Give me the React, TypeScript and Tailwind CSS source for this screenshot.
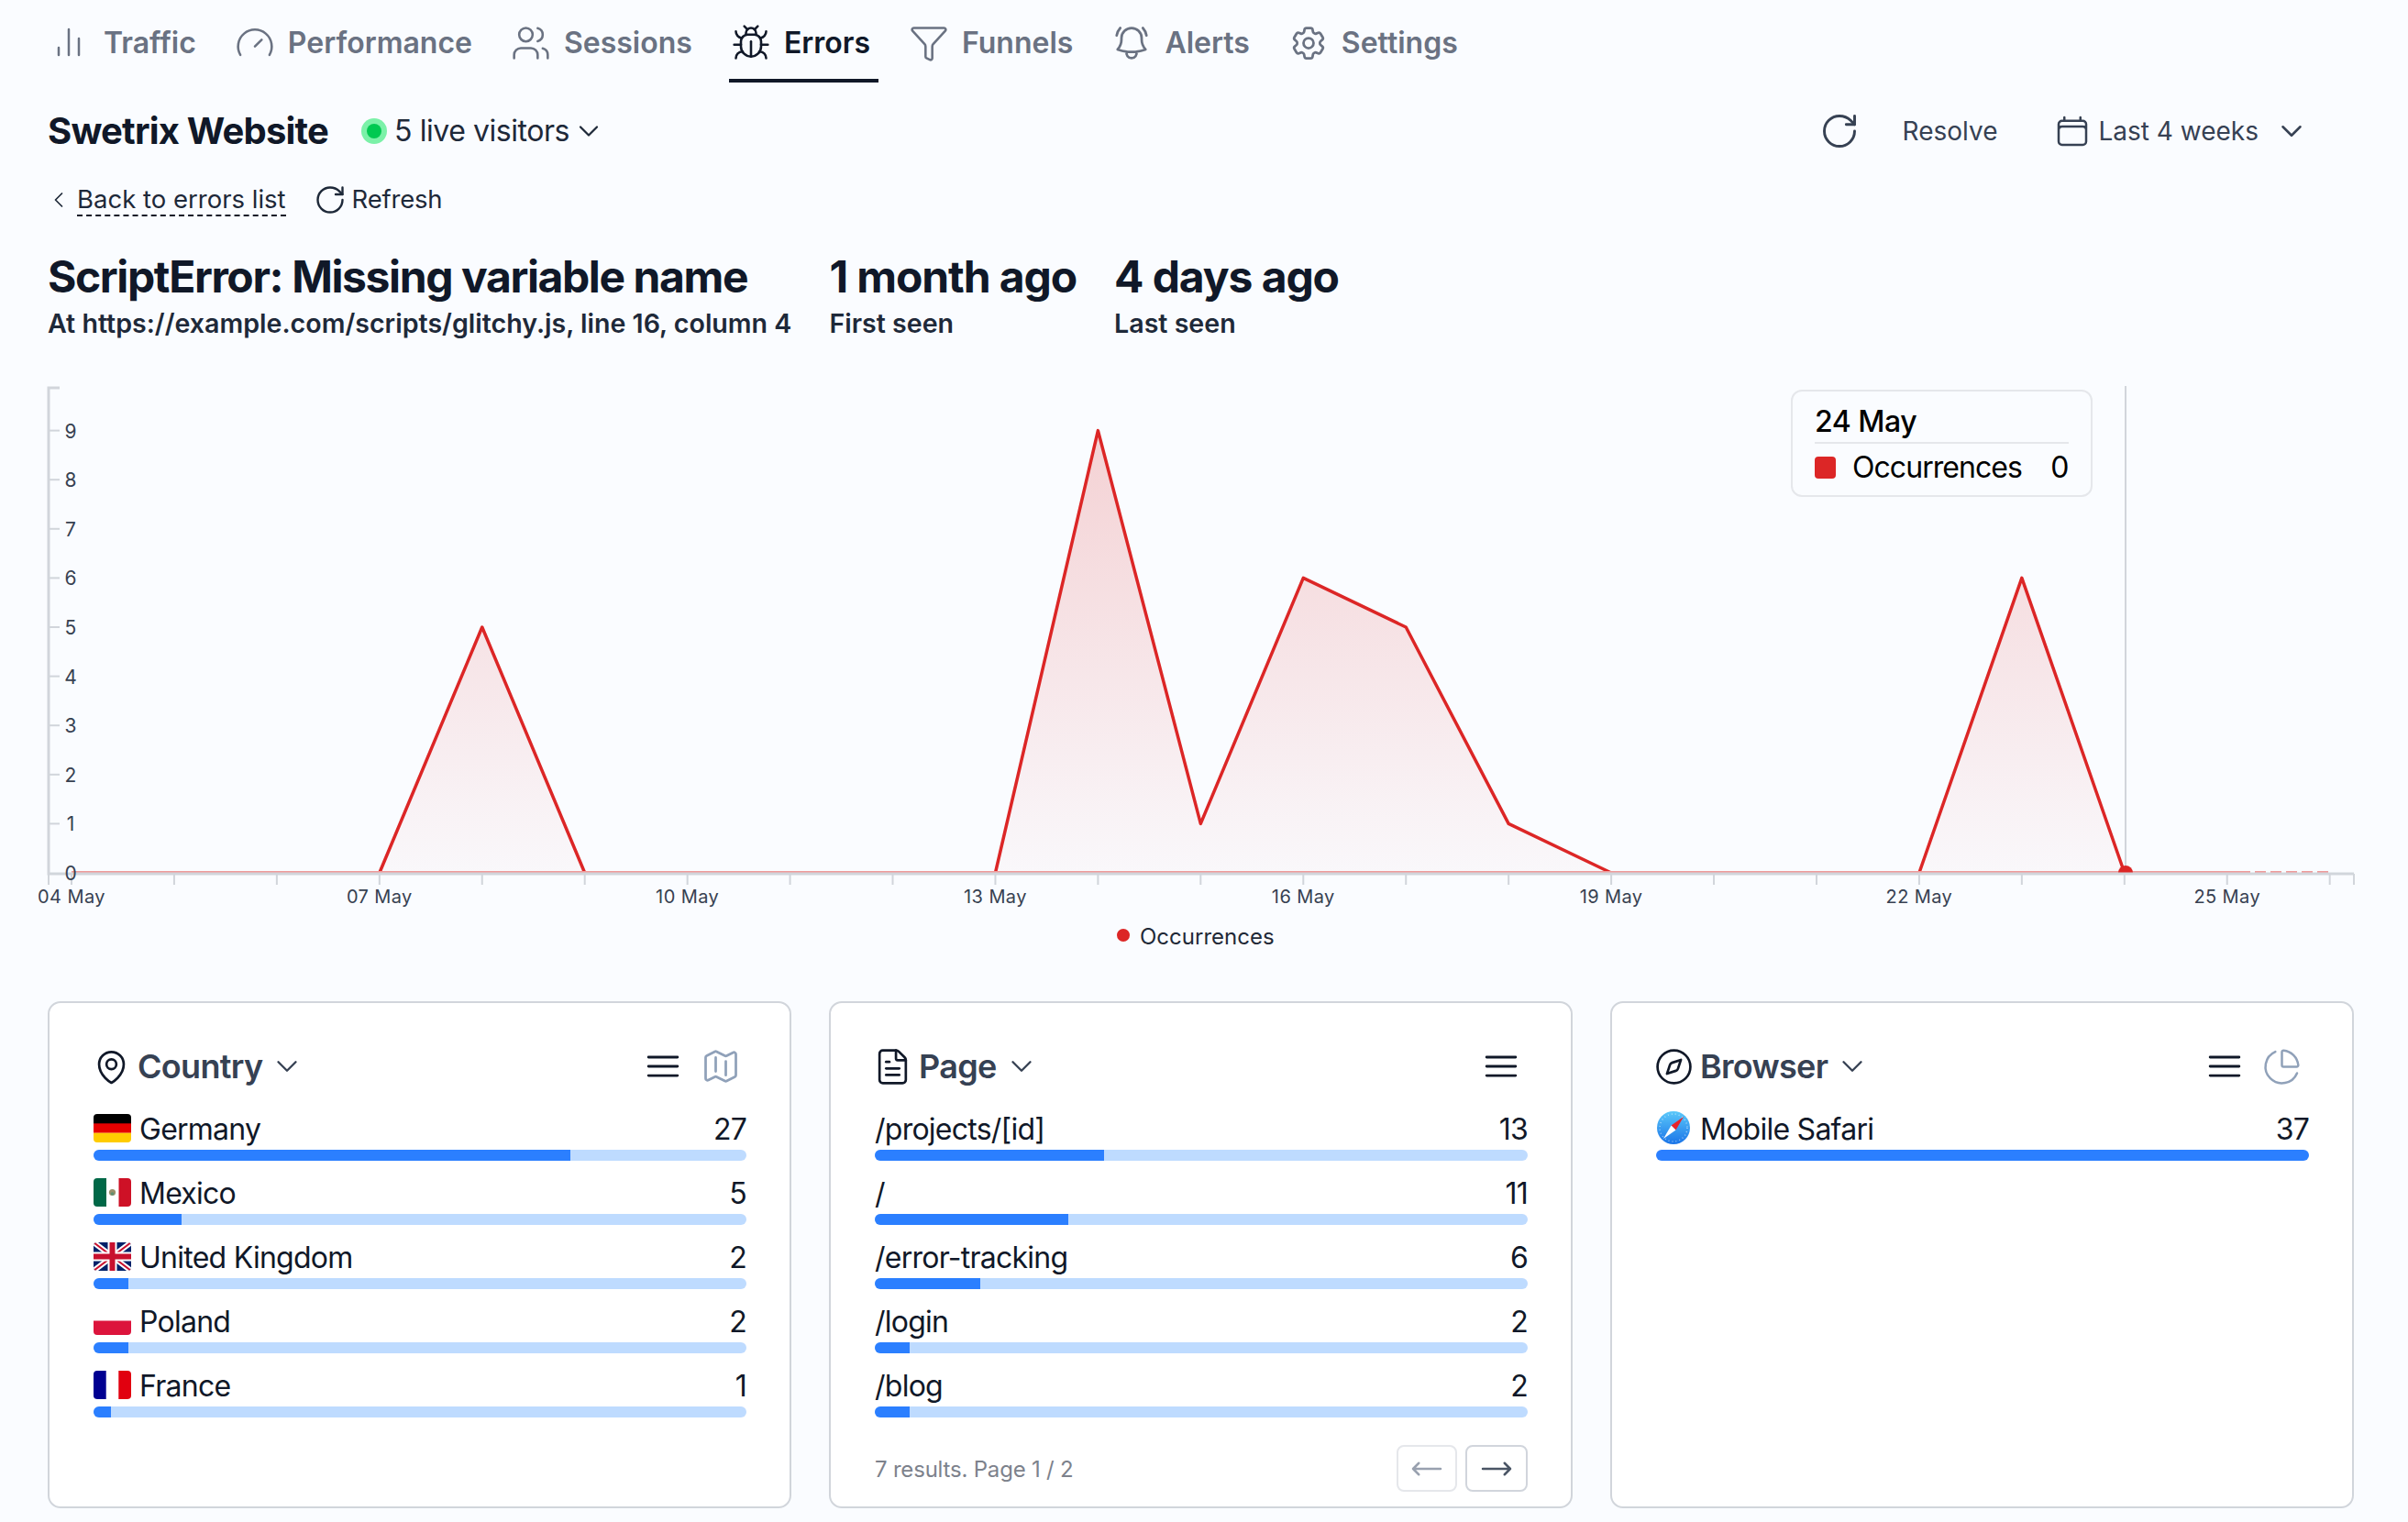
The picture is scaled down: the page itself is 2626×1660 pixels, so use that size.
import { Bug, ChartPie, ChevronDown, ChevronLeft, Compass, FileText, Funnel, Gauge, RotateCw, Users } from "lucide-react";
import {
  HiOutlineArrowLongLeft,
  HiOutlineArrowLongRight,
  HiOutlineBars3,
  HiOutlineBellAlert,
  HiOutlineCalendar,
  HiOutlineCog6Tooth,
  HiOutlineMap,
  HiOutlineMapPin,
} from "react-icons/hi2";
import type { ReactNode } from "react";

const TrafficIcon = () => (
  <svg viewBox="0 0 44 44" className="w-[44px] h-[44px] shrink-0" fill="none" stroke="currentColor" strokeWidth="2.5" strokeLinecap="round">
    <path d="M9 27v8M20 7v28M31 17v18" />
  </svg>
);

const tabs = [
  { label: "Traffic", icon: <TrafficIcon /> },
  { label: "Performance", icon: <Gauge className="w-[44px] h-[44px] shrink-0" strokeWidth={1.4} /> },
  { label: "Sessions", icon: <Users className="w-[44px] h-[44px] shrink-0" strokeWidth={1.4} /> },
  { label: "Errors", icon: <Bug className="w-[44px] h-[44px] shrink-0" strokeWidth={1.4} />, active: true },
  { label: "Funnels", icon: <Funnel className="w-[44px] h-[44px] shrink-0" strokeWidth={1.4} /> },
  { label: "Alerts", icon: <HiOutlineBellAlert className="w-[44px] h-[44px] shrink-0" /> },
  { label: "Settings", icon: <HiOutlineCog6Tooth className="w-[44px] h-[44px] shrink-0" /> },
];

const series = [0, 0, 0, 0, 5, 0, 0, 0, 0, 0, 9, 1, 6, 5, 1, 0, 0, 0, 0, 6, 0];
const xOf = (i: number) => 78 + 111.94 * i;
const yOf = (v: number) => 952 - 53.6 * v;
const xLabels = [
  ["04 May", 0],
  ["07 May", 3],
  ["10 May", 6],
  ["13 May", 9],
  ["16 May", 12],
  ["19 May", 15],
  ["22 May", 18],
  ["25 May", 21],
] as const;

const Chart = () => {
  const line = series.map((v, i) => `${xOf(i)},${yOf(v)}`).join(" ");
  const area = `${xOf(0)},952 ${line} ${xOf(20)},952`;
  const ticks = Array.from({ length: 23 }, (_, i) => xOf(i));
  return (
    <div className="relative h-[682px]">
      <svg viewBox="0 410 2626 682" className="block w-[2626px] h-[682px]">
        <defs>
          <linearGradient id="occ" gradientUnits="userSpaceOnUse" x1="0" y1="470" x2="0" y2="952">
            <stop offset="0" stopColor="#dc2626" stopOpacity="0.2" />
            <stop offset="1" stopColor="#dc2626" stopOpacity="0.02" />
          </linearGradient>
        </defs>
        <polygon points={area} fill="url(#occ)" />
        <line x1="2318" y1="421" x2="2318" y2="953" stroke="#d1d5db" strokeWidth="2" />
        <polyline points={line} fill="none" stroke="#dc2626" strokeWidth="3.5" strokeLinejoin="round" />
        <line x1="78" y1="951" x2="2442" y2="951" stroke="#ee9a9a" strokeWidth="2" />
        <line x1="2442" y1="951" x2="2540" y2="951" stroke="#ee9a9a" strokeWidth="2" strokeDasharray="12 5" />
        <path d="M2310 952a8 8 0 0 1 16 0z" fill="#dc2626" />
        {/* axes */}
        <path d="M65 423H53V953H2567" fill="none" stroke="#d1d5db" strokeWidth="3" />
        {[1, 2, 3, 4, 5, 6, 7, 8, 9].map((v) => (
          <line key={v} x1="53" x2="65" y1={yOf(v)} y2={yOf(v)} stroke="#d1d5db" strokeWidth="2" />
        ))}
        {[53, ...ticks, 2567].map((x) => (
          <line key={x} x1={x} x2={x} y1="953" y2="965" stroke="#d1d5db" strokeWidth="2" />
        ))}
        <g fill="#374151" fontSize="21" fontFamily="Inter, sans-serif">
          {[0, 1, 2, 3, 4, 5, 6, 7, 8, 9].map((v) => (
            <text key={v} x="77" y={yOf(v) + 8} textAnchor="middle">
              {v}
            </text>
          ))}
        </g>
        <g fill="#374151" fontSize="20" fontFamily="Inter, sans-serif">
          {xLabels.map(([label, i]) => (
            <text key={label} x={xOf(i)} y="985" textAnchor="middle" letterSpacing="0.4">
              {label}
            </text>
          ))}
        </g>
        <circle cx="1225" cy="1020" r="7" fill="#dc2626" />
        <text x="1243" y="1030" fontSize="24" fill="#1f2937" fontFamily="Inter, sans-serif">
          Occurrences
        </text>
      </svg>
      <div className="absolute left-[1953px] top-[15px] w-[329px] h-[117px] rounded-xl border-2 border-[#e5e7eb] bg-[#fafcff] px-[24px] text-black tracking-[-0.5px]">
        <div className="h-[57px] pt-[14px] border-b-2 border-[#e5e7eb] text-[32px] leading-[38px] font-medium">24 May</div>
        <div className="flex items-center h-[52px] text-[32px]">
          <span className="w-[23px] h-[24px] rounded-[4px] bg-[#dc2626]" />
          <span className="ml-[18px] tracking-[-0.95px]">Occurrences</span>
          <span className="ml-auto">0</span>
        </div>
      </div>
    </div>
  );
};

const FlagShell = ({ children }: { children: ReactNode }) => (
  <svg viewBox="0 0 41 31" className="w-[41px] h-[31px] shrink-0 rounded-[4px]">
    {children}
  </svg>
);

const Germany = () => (
  <FlagShell>
    <rect width="41" height="11" fill="#000" />
    <rect y="10.3" width="41" height="10.4" fill="#e60000" />
    <rect y="20.7" width="41" height="10.3" fill="#ffcc00" />
  </FlagShell>
);
const Mexico = () => (
  <FlagShell>
    <rect width="14" height="31" fill="#006847" />
    <rect x="27.5" width="13.5" height="31" fill="#ce1126" />
    <circle cx="20.5" cy="15.5" r="3.6" fill="#9a8f6a" />
    <circle cx="20.5" cy="17" r="1.8" fill="#5f8f72" />
  </FlagShell>
);
const UnitedKingdom = () => (
  <FlagShell>
    <rect width="41" height="31" fill="#012169" />
    <path d="M0 0 41 31M41 0 0 31" stroke="#fff" strokeWidth="6" />
    <path d="M0 0 41 31M41 0 0 31" stroke="#c8102e" strokeWidth="2" />
    <path d="M20.5 0v31M0 15.5h41" stroke="#fff" strokeWidth="10" />
    <path d="M20.5 0v31M0 15.5h41" stroke="#c8102e" strokeWidth="6" />
  </FlagShell>
);
const Poland = () => (
  <FlagShell>
    <rect y="15.5" width="41" height="15.5" fill="#dc143c" />
  </FlagShell>
);
const France = () => (
  <FlagShell>
    <rect width="13.7" height="31" fill="#000091" />
    <rect x="27.3" width="13.7" height="31" fill="#e1000f" />
  </FlagShell>
);

const SafariIcon = () => (
  <svg viewBox="0 0 36 36" className="w-[36px] h-[36px] shrink-0 ml-[1px] mr-[2px]">
    <defs>
      <linearGradient id="saf" x1="0" y1="0" x2="0" y2="1">
        <stop offset="0" stopColor="#5ac8fa" />
        <stop offset="1" stopColor="#1a74e8" />
      </linearGradient>
    </defs>
    <circle cx="18" cy="18" r="18" fill="url(#saf)" />
    <circle cx="18" cy="18" r="15" fill="none" stroke="#fff" strokeOpacity="0.5" strokeWidth="1.5" strokeDasharray="1 3" />
    <polygon points="29,6 15.5,15.5 20.5,20.5" fill="#e8232a" />
    <polygon points="7,30 15.5,15.5 20.5,20.5" fill="#fff" />
  </svg>
);

const Row = ({ icon, label, value, percent }: { icon?: ReactNode; label: string; value: number; percent: number }) => (
  <div className="h-[70px]">
    <div className="flex items-center h-[48px] text-[32px] text-gray-900 tracking-[-0.75px]">
      {icon}
      <span className={icon ? "ml-[9px] pt-[3px]" : "pt-[3px]"}>{label}</span>
      <span className="ml-auto pt-[3px]">{value}</span>
    </div>
    <div className="h-[12px] rounded-full bg-blue-200 overflow-hidden">
      <div className="h-full bg-blue-500" style={{ width: `${percent}%` }} />
    </div>
  </div>
);

const Card = ({
  icon,
  title,
  actions,
  children,
}: {
  icon: ReactNode;
  title: string;
  actions: ReactNode;
  children: ReactNode;
}) => (
  <div className="w-[811px] h-[553px] rounded-[14px] border-2 border-[#d1d5db] bg-white pl-[48px] pr-[47px] pt-[41px]">
    <div className="flex items-center h-[56px] mb-[15px]">
      <span className="-ml-[2px] mr-[7px] text-gray-900 flex">{icon}</span>
      <span className="text-[36px] font-semibold text-gray-700 tracking-[-0.7px]">{title}</span>
      <ChevronDown className="w-[38px] h-[38px] ml-[8px] text-gray-700" strokeWidth={1.5} />
      <div className="ml-auto flex items-center gap-[18px] mr-[6px]">{actions}</div>
    </div>
    {children}
  </div>
);

const MenuIcon = () => <HiOutlineBars3 className="w-[46px] h-[46px] text-gray-900" />;

const App = () => {
  return (
    <div className="w-[2626px] h-[1660px] overflow-hidden bg-[#fafcff] font-['Inter',sans-serif] text-gray-900">
      <nav className="flex gap-[31px] pl-[53px] h-[90px]">
        {tabs.map((t) => (
          <div
            key={t.label}
            className={
              t.active
                ? "flex items-center gap-[14px] pl-[2px] pr-[9px] pt-[8px] border-b-4 border-gray-900 text-gray-900 text-[32px] font-semibold"
                : "flex items-center gap-[14px] pl-[2px] pr-[9px] pt-[8px] border-b-4 border-transparent text-gray-500 text-[32px] font-semibold"
            }
          >
            {t.icon}
            {t.label}
          </div>
        ))}
      </nav>

      <div className="flex items-center h-[106px] pl-[52px] pr-[108px]">
        <h1 className="text-[40px] font-bold tracking-[-0.8px]">Swetrix Website</h1>
        <span className="ml-[36px] w-[28px] h-[28px] rounded-full bg-green-300 flex items-center justify-center">
          <span className="w-[16px] h-[16px] rounded-full bg-green-500" />
        </span>
        <span className="ml-[8px] text-[32px] text-gray-800 tracking-[-0.45px]">5 live visitors</span>
        <ChevronDown className="w-[36px] h-[36px] ml-[3px] text-gray-800" strokeWidth={1.5} />
        <div className="ml-auto flex items-center text-gray-700 text-[28px]">
          <RotateCw className="w-[44px] h-[44px]" strokeWidth={1.6} />
          <span className="ml-[47px]">Resolve</span>
          <HiOutlineCalendar className="w-[40px] h-[40px] ml-[62px]" />
          <span className="ml-[8px]">Last 4 weeks</span>
          <ChevronDown className="w-[38px] h-[38px] ml-[17px]" strokeWidth={1.6} />
        </div>
      </div>

      <div className="flex items-center h-[44px] pl-[50px] text-[27.5px] text-gray-800">
        <ChevronLeft className="w-[28px] h-[28px]" strokeWidth={1.5} />
        <span className="ml-[6px] border-b-2 border-dashed border-gray-900 leading-[34px]">Back to errors list</span>
        <RotateCw className="w-[36px] h-[36px] ml-[30px]" strokeWidth={1.6} />
        <span className="ml-[6px] tracking-[-0.2px]">Refresh</span>
      </div>

      <div className="flex gap-[41px] pl-[52px] pt-[32px] h-[170px]">
        <div>
          <div className="text-[48px] leading-[60px] font-bold tracking-[-1.4px]">ScriptError: Missing variable name</div>
          <div className="mt-[3px] text-[28.6px] leading-[36px] font-semibold text-gray-800">
            At https://example.com/scripts/glitchy.js, line 16, column 4
          </div>
        </div>
        <div>
          <div className="text-[48px] leading-[60px] font-bold tracking-[-1.1px]">1 month ago</div>
          <div className="mt-[3px] text-[28.6px] leading-[36px] font-semibold text-gray-800">First seen</div>
        </div>
        <div>
          <div className="text-[48px] leading-[60px] font-bold tracking-[-1.1px]">4 days ago</div>
          <div className="mt-[3px] text-[28.6px] leading-[36px] font-semibold text-gray-800">Last seen</div>
        </div>
      </div>

      <Chart />

      <div className="flex gap-[41px] pl-[52px]">
        <Card
          icon={<HiOutlineMapPin className="w-[43px] h-[43px]" />}
          title="Country"
          actions={
            <>
              <MenuIcon />
              <HiOutlineMap className="w-[44px] h-[44px] text-slate-400" />
            </>
          }
        >
          <Row icon={<Germany />} label="Germany" value={27} percent={73} />
          <Row icon={<Mexico />} label="Mexico" value={5} percent={13.5} />
          <Row icon={<UnitedKingdom />} label="United Kingdom" value={2} percent={5.4} />
          <Row icon={<Poland />} label="Poland" value={2} percent={5.4} />
          <Row icon={<France />} label="France" value={1} percent={2.7} />
        </Card>

        <Card icon={<FileText className="w-[43px] h-[43px]" strokeWidth={1.5} />} title="Page" actions={<MenuIcon />}>
          <Row label="/projects/[id]" value={13} percent={35.1} />
          <Row label="/" value={11} percent={29.7} />
          <Row label="/error-tracking" value={6} percent={16.2} />
          <Row label="/login" value={2} percent={5.4} />
          <Row label="/blog" value={2} percent={5.4} />
          <div className="mt-[20px] flex items-center h-[51px]">
            <span className="pt-[2px] text-[24px] text-[#7d828c] tracking-[-0.2px]">7 results. Page 1 / 2</span>
            <div className="ml-auto flex gap-[9px]">
              <button className="w-[66px] h-[51px] rounded-lg border-2 border-gray-200 flex items-center justify-center text-gray-400">
                <HiOutlineArrowLongLeft className="w-[40px] h-[40px]" />
              </button>
              <button className="w-[68px] h-[51px] rounded-lg border-2 border-gray-300 flex items-center justify-center text-gray-600">
                <HiOutlineArrowLongRight className="w-[40px] h-[40px]" />
              </button>
            </div>
          </div>
        </Card>

        <Card
          icon={<Compass className="w-[43px] h-[43px]" strokeWidth={1.5} />}
          title="Browser"
          actions={
            <>
              <MenuIcon />
              <ChartPie className="w-[43px] h-[43px] mr-[2px] text-slate-400" strokeWidth={1.4} />
            </>
          }
        >
          <Row icon={<SafariIcon />} label="Mobile Safari" value={37} percent={100} />
        </Card>
      </div>
    </div>
  );
};

export default App;
